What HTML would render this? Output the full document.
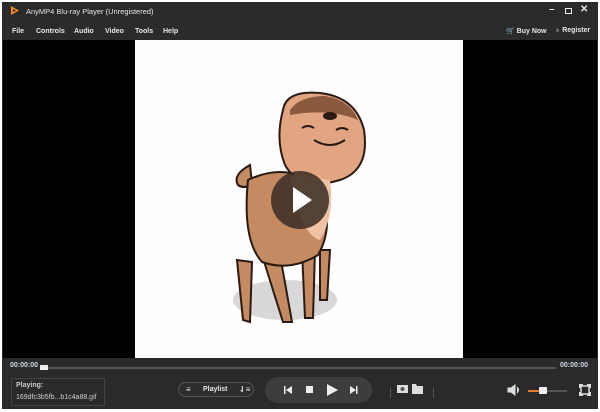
<!DOCTYPE html>
<html><head><meta charset="utf-8"><style>
*{margin:0;padding:0;box-sizing:border-box}
body{width:600px;height:412px;background:#fff;position:relative;overflow:hidden;font-family:"Liberation Sans",sans-serif;color:#ddd}
.win{position:absolute;left:2px;top:2px;width:596px;height:407px;background:#2a2a2a}
.t{position:absolute;font-size:7px;font-weight:bold;color:#e6e6e6;white-space:nowrap}
.menu{position:absolute;left:0;top:19px;width:596px;height:20px;background:#2b2b2b;border-top:1px solid #3a2a26}
.video{position:absolute;left:1px;top:38px;width:594px;height:320px;background:#000}
.bot{position:absolute;left:0;top:356px;width:596px;height:51px;background:#2a2a2a}
</style></head><body>
<div class="win">
 <svg style="position:absolute;left:8px;top:3px" width="10" height="11"><path d="M1 1 L9 5.5 L1 10 Z M3 4 L3 7 L6 5.5Z" fill="#f08a1c" fill-rule="evenodd"/></svg>
 <div class="t" style="left:24px;top:5px;font-weight:normal;font-size:7.5px">AnyMP4 Blu-ray Player (Unregistered)</div>
 <div class="t" style="left:547px;top:2px;font-size:10px">–</div>
 <div style="position:absolute;left:563px;top:6px;width:7px;height:6px;border:1.5px solid #eee"></div>
 <div class="t" style="left:578px;top:2px;font-size:10px">✕</div>
 <div class="menu">
  <div class="t" style="left:10px;top:6px">File</div>
  <div class="t" style="left:34px;top:6px">Controls</div>
  <div class="t" style="left:72px;top:6px">Audio</div>
  <div class="t" style="left:103px;top:6px">Video</div>
  <div class="t" style="left:133px;top:6px">Tools</div>
  <div class="t" style="left:161px;top:6px">Help</div>
  <div class="t" style="left:504px;top:5px">🛒 Buy Now</div>
  <div class="t" style="left:553px;top:5px">♁ Register</div>
 </div>
 <div class="video">
  <svg style="position:absolute;left:132px;top:0" width="328" height="320" viewBox="135 40 328 320">
   <rect x="135" y="40" width="328" height="320" fill="#fefefe"/>
   <ellipse cx="285" cy="300" rx="52" ry="20" fill="#d8d8d8"/>
   <g stroke="#2a1a14" stroke-width="2" fill="#c48a62">
    <path d="M237 260 L243 320 L250 322 L252 262Z"/>
    <path d="M262 255 L283 322 L292 322 L280 255Z"/>
    <path d="M302 250 L305 318 L313 318 L315 250Z"/>
    <path d="M320 250 L320 300 L327 300 L330 250Z"/>
    <path d="M250 165 Q232 175 238 185 Q245 190 252 183Z"/>
    <path d="M248 180 Q242 240 262 262 Q290 272 318 255 Q335 225 320 190 Q290 160 248 180Z"/>
    <path d="M283 110 Q286 90 320 93 Q356 97 364 130 Q370 170 340 180 Q300 192 285 165 Q275 140 283 110Z" fill="#e2a582"/>
   </g>
   <path d="M290 110 Q300 96 325 96 Q350 100 358 120 Q330 108 290 115Z" fill="#8a5a3e"/>
   <path d="M290 175 Q300 235 320 240 Q335 215 330 180Z" fill="#f0c2a4"/>
   <ellipse cx="330" cy="116" rx="7" ry="4" fill="#2a1a14"/>
   <path d="M302 128 Q308 124 314 128 M336 130 Q342 126 348 130 M314 140 Q330 150 345 140" stroke="#2a1a14" stroke-width="2" fill="none"/>
   <circle cx="300" cy="200" r="29" fill="#3a2b24" opacity=".85"/>
   <path d="M293 187 L312 200 L293 213Z" fill="#fff"/>
  </svg>
 </div>
 <div class="bot">
  <div class="t" style="left:8px;top:4px;font-size:7px;color:#cfd8e8">00:00:00</div>
  <div style="position:absolute;left:38px;top:7px;width:8px;height:5px;background:#eee"></div>
  <div style="position:absolute;left:46px;top:9px;width:508px;height:2px;background:#555"></div>
  <div class="t" style="left:558px;top:4px;font-size:7px;color:#cfd8e8">00:00:00</div>
  <div style="position:absolute;left:9px;top:20px;width:94px;height:28px;border:1px solid #444"></div>
  <div class="t" style="left:14px;top:24px;font-size:7px;color:#ccc">Playing:</div>
  <div class="t" style="left:14px;top:36px;font-size:7px;color:#ccc;font-weight:normal">169dfc3b5fb...b1c4a88.gif</div>
  <div style="position:absolute;left:176px;top:24px;width:76px;height:15px;border:1px solid #555;border-radius:8px;background:#2e2e2e"></div>
  <div class="t" style="left:184px;top:27px;font-size:8px">≡</div>
  <div class="t" style="left:201px;top:28px;font-size:7px">Playlist</div>
  <div class="t" style="left:237px;top:27px;font-size:8px">⇃≡</div>
  <div style="position:absolute;left:263px;top:19px;width:107px;height:26px;border-radius:13px;background:#3d3d3d"></div>
  <svg style="position:absolute;left:263px;top:19px" width="107" height="26">
   <path d="M19 9v8h1.5v-8z M27 9 L21 13 L27 17Z" fill="#eee"/>
   <rect x="41" y="9" width="7" height="7" fill="#eee"/>
   <path d="M62 7 L73 13 L62 19Z" fill="#eee"/>
   <path d="M85 9 L91 13 L85 17Z M91 9h1.5v8H91z" fill="#eee"/>
  </svg>
  <div style="position:absolute;left:388px;top:30px;width:1px;height:10px;background:#555"></div>
  <svg style="position:absolute;left:394px;top:25px" width="30" height="12"><rect x="1" y="2" width="11" height="8" fill="#ddd"/><circle cx="6.5" cy="6" r="2" fill="#555"/><path d="M16 1h4l1 2h6v8h-11z" fill="#ddd"/></svg>
  <div style="position:absolute;left:431px;top:30px;width:1px;height:10px;background:#555"></div>
  <svg style="position:absolute;left:505px;top:26px" width="14" height="12"><path d="M1 4h3l4-3v10l-4-3h-3z M10 3q3 3 0 6" fill="#ddd" stroke="#ddd"/></svg>
  <div style="position:absolute;left:526px;top:32px;width:14px;height:2px;background:#e8792a"></div>
  <div style="position:absolute;left:540px;top:32px;width:25px;height:2px;background:#555"></div>
  <div style="position:absolute;left:537px;top:29px;width:8px;height:7px;background:#eee;border-radius:1px"></div>
  <svg style="position:absolute;left:577px;top:26px" width="12" height="12"><rect x="2" y="2" width="8" height="8" fill="none" stroke="#ddd" stroke-width="1.5"/><path d="M0 0h4v1.5h-2.5v2.5h-1.5z M12 0h-4v1.5h2.5v2.5h1.5z M0 12h4v-1.5h-2.5v-2.5h-1.5z M12 12h-4v-1.5h2.5v-2.5h1.5z" fill="#ddd"/></svg>
 </div>
</div>
</body></html>
